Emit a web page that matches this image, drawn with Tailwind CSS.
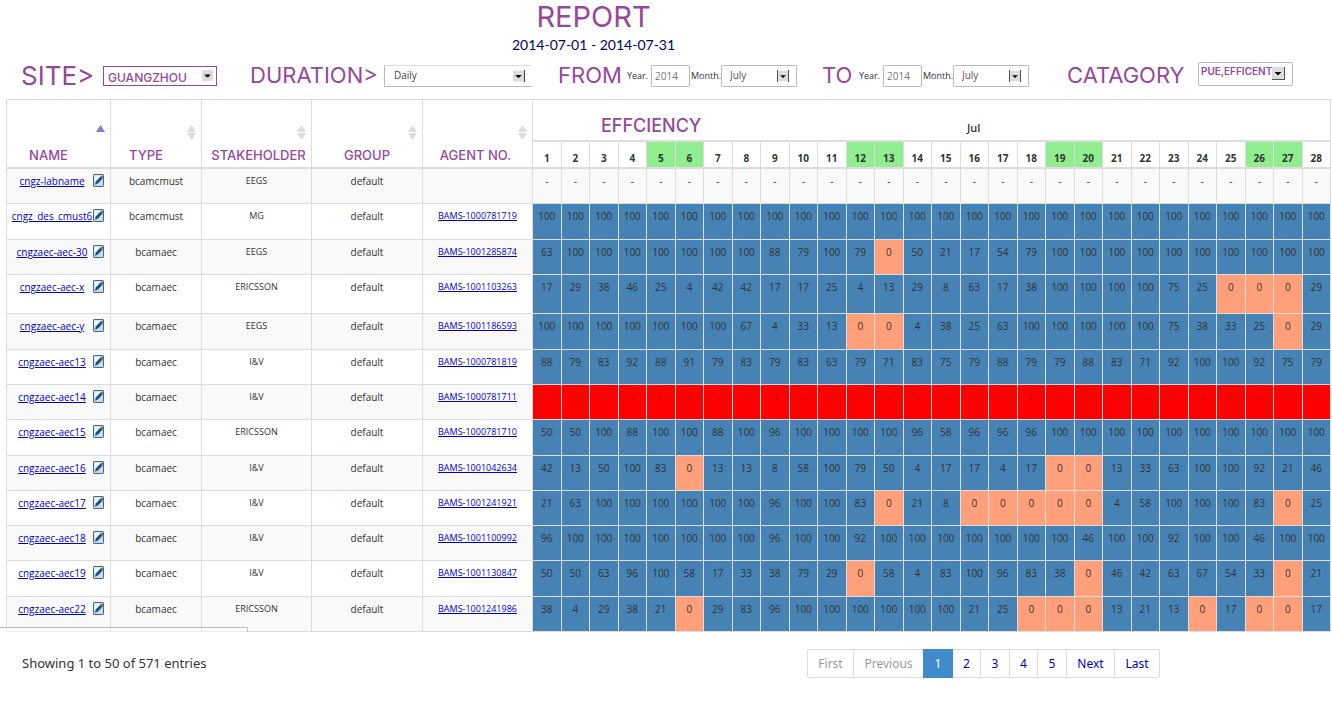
<!DOCTYPE html>
<html lang="en">
<head>
<meta charset="utf-8">
<title>Report</title>
<script src="https://cdn.jsdelivr.net/npm/@tailwindcss/browser@4"></script>
</head>
<body class="bg-white font-['Open_Sans',sans-serif] text-[10px] text-[#333] overflow-x-hidden">

<svg class="hidden">
  <symbol id="arrow" viewBox="0 0 12 12">
    <rect width="12" height="12" fill="#dcdcdc"/>
    <path d="M3 5h6v1h-1v1h-1v1h-2v-1h-1v-1h-1z" fill="#000"/>
  </symbol>
  <symbol id="sort" viewBox="0 0 9 15">
    <path d="M4.500 0L9 7H0zM0 8H9L4.500 15z" fill="#dcdcdc"/>
  </symbol>
  <symbol id="sort-asc" viewBox="0 0 9 15">
    <path d="M4.500 0L9 7H0z" fill="#7f7fd5"/>
  </symbol>
  <symbol id="edit" viewBox="0 0 11 13">
    <rect x=".5" y=".5" width="10" height="12" rx=".6" fill="#c6dde8" stroke="#4b6675"/>
    <path d="M1.500 1.500h6L1.500 9z" fill="#eef7fa"/>
    <path d="M2 10.800L2.800 7.400L7.400 2.800L9.400 4.800L4.900 9.600z" fill="#1d4f80"/>
    <path d="M7.400 2.800L9.200 1.400L10.200 3L9.400 4.800z" fill="#4d6b78"/>
  </symbol>
</svg>

<header class="ml-[512px] flex w-fit flex-col items-center pt-1">
  <h1 class="font-[Inter,sans-serif] text-[29px] leading-[26px] text-[#96489a]">REPORT</h1>
  <p class="pt-1.5 font-[Lato,sans-serif] text-[14px] leading-[18px] text-[#000066]">2014-07-01 - 2014-07-31</p>
</header>

<form class="grid h-[45px] grid-cols-[229px_308px_264px_245px_1fr] items-center pb-0.5 pl-[21px] font-[Inter,sans-serif] text-[22px] text-[#96489a]">
  <div class="flex items-center">
    <label for="site" class="w-[82px] text-[26px]">SITE&gt;</label>
    <span class="relative">
      <select id="site" class="block h-5 w-[114px] appearance-none border border-[#96489a] bg-white pt-1 pl-1 text-[12px] leading-[14px] font-medium"><option>GUANGZHOU</option></select>
      <svg class="pointer-events-none absolute top-1 right-1 size-[11px]"><use href="#arrow"/></svg>
    </span>
  </div>
  <div class="flex items-center">
    <label for="duration" class="w-[134px]">DURATION&gt;</label>
    <span class="relative">
      <select id="duration" class="block h-[22px] w-[148px] appearance-none border-y border-l border-t-[#ddd] border-b-[#bbb] border-l-[#bbb] bg-white pl-[9px] font-['Open_Sans',sans-serif] text-[10px] text-[#444]"><option>Daily</option></select>
      <svg class="pointer-events-none absolute top-[5px] right-[7px] size-3 border-r border-[#444]"><use href="#arrow"/></svg>
    </span>
  </div>
  <div class="flex items-center">
    <span class="w-[69px]">FROM</span>
    <label for="year-from" class="w-[24px] font-['Open_Sans',sans-serif] text-[9px] text-[#333]">Year.</label>
    <input id="year-from" value="2014" class="h-[22px] w-[39px] rounded-xs border border-[#bbb] pl-[3px] font-['Open_Sans',sans-serif] text-[10px] text-[#777]">
    <label for="month-from" class="w-[31px] pl-px font-['Open_Sans',sans-serif] text-[9px] text-[#333]">Month.</label>
    <span class="relative">
      <select id="month-from" class="block h-[22px] w-[76px] appearance-none rounded-xs border border-[#bbb] bg-white pl-2 font-['Open_Sans',sans-serif] text-[10px] text-[#555]"><option>July</option></select>
      <svg class="pointer-events-none absolute top-[5px] right-2 size-3 border-x border-[#555]"><use href="#arrow"/></svg>
    </span>
  </div>
  <div class="flex items-center">
    <span class="w-[37px]">TO</span>
    <label for="year-to" class="w-[24px] font-['Open_Sans',sans-serif] text-[9px] text-[#333]">Year.</label>
    <input id="year-to" value="2014" class="h-[22px] w-[39px] rounded-xs border border-[#bbb] pl-[3px] font-['Open_Sans',sans-serif] text-[10px] text-[#777]">
    <label for="month-to" class="w-[31px] pl-px font-['Open_Sans',sans-serif] text-[9px] text-[#333]">Month.</label>
    <span class="relative">
      <select id="month-to" class="block h-[22px] w-[76px] appearance-none rounded-xs border border-[#bbb] bg-white pl-2 font-['Open_Sans',sans-serif] text-[10px] text-[#555]"><option>July</option></select>
      <svg class="pointer-events-none absolute top-[5px] right-2 size-3 border-x border-[#555]"><use href="#arrow"/></svg>
    </span>
  </div>
  <div class="flex items-center">
    <label for="category" class="w-[131px]">CATAGORY</label>
    <span class="relative">
      <select id="category" class="mb-1 block h-6 w-[95px] appearance-none rounded-xs border border-[#bbb] bg-white pb-1 pl-0.5 text-[10px] font-semibold"><option>PUE,EFFICENT</option></select>
      <svg class="pointer-events-none absolute top-[5px] right-2 size-[13px] border-r border-b border-[#555]"><use href="#arrow"/></svg>
    </span>
  </div>
</form>

<div class="relative pr-px pl-1.5">
  <table class="w-full table-fixed border-collapse border border-[#ddd] text-center">
    <colgroup>
      <col class="w-[104px]"><col class="w-[91px]"><col class="w-[110px]"><col class="w-[111px]"><col class="w-[110px]"><col span="28">
    </colgroup>
    <thead>
      <tr id="head" class="h-[41px]"></tr>
      <tr id="days" class="h-[27px]"></tr>
    </thead>
    <tbody id="body"></tbody>
  </table>
  <div class="absolute bottom-0 left-0 h-[5px] w-[248px] rounded-tr-xs border-t border-r border-[#bbb] bg-white/50"></div>
</div>

<footer class="flex items-center justify-between pt-[17px] pr-[172px] pl-[22px] font-['Noto_Sans',sans-serif] text-[12px]">
  <p class="text-[13px]">Showing 1 to 50 of 571 entries</p>
  <nav class="flex h-[29px] rounded-xs border border-[#ddd] text-[#0000cc]">
    <button type="button" disabled class="w-[46px] border-r border-[#ddd] text-[#999]">First</button>
    <button type="button" disabled class="w-[69px] text-[#999]">Previous</button>
    <a href="#1" class="-my-px flex w-[30px] items-center justify-center bg-[#428bca] text-white">1</a>
    <a href="#2" class="flex w-7 items-center justify-center border-r border-[#ddd]">2</a>
    <a href="#3" class="flex w-[29px] items-center justify-center border-r border-[#ddd]">3</a>
    <a href="#4" class="flex w-7 items-center justify-center border-r border-[#ddd]">4</a>
    <a href="#5" class="flex w-[29px] items-center justify-center border-r border-[#ddd]">5</a>
    <a href="#next" class="flex w-12 items-center justify-center border-r border-[#ddd]">Next</a>
    <a href="#last" class="flex w-11 items-center justify-center">Last</a>
  </nav>
</footer>

<script>
const H100 = Array(28).fill(100).join(' ');
const dashes = Array(28).fill('-').join(' ');
const tall = 'h-9', base = 'h-[35px]', extra = 'h-[39px]';
const rows = [
  ['cngz-labname', 'bcamcmust', 'EEGS', '', dashes, tall],
  ['cngz_des_cmust6', 'bcamcmust', 'MG', 'BAMS-1000781719', H100, tall],
  ['cngzaec-aec-30', 'bcamaec', 'EEGS', 'BAMS-1001285874', '63 100 100 100 100 100 100 100 88 79 100 79 0 50 21 17 54 79 100 100 100 100 100 100 100 100 100 100', base],
  ['cngzaec-aec-x', 'bcamaec', 'ERICSSON', 'BAMS-1001103263', '17 29 38 46 25 4 42 42 17 17 25 4 13 29 8 63 17 38 100 100 100 100 75 25 0 0 0 29', extra],
  ['cngzaec-aec-y', 'bcamaec', 'EEGS', 'BAMS-1001186593', '100 100 100 100 100 100 100 67 4 33 13 0 0 4 38 25 63 100 100 100 100 100 75 38 33 25 0 29', tall],
  ['cngzaec-aec13', 'bcamaec', 'I&amp;V', 'BAMS-1000781819', '88 79 83 92 88 91 79 83 79 83 63 79 71 83 75 79 88 79 79 88 83 71 92 100 100 92 75 79', base],
  ['cngzaec-aec14', 'bcamaec', 'I&amp;V', 'BAMS-1000781711', dashes, base],
  ['cngzaec-aec15', 'bcamaec', 'ERICSSON', 'BAMS-1000781710', '50 50 100 88 100 100 88 100 96 100 100 100 100 96 58 96 96 96 100 100 100 100 100 100 100 100 100 100', tall],
  ['cngzaec-aec16', 'bcamaec', 'I&amp;V', 'BAMS-1001042634', '42 13 50 100 83 0 13 13 8 58 100 79 50 4 17 17 4 17 0 0 13 33 63 100 100 92 21 46', base],
  ['cngzaec-aec17', 'bcamaec', 'I&amp;V', 'BAMS-1001241921', '21 63 100 100 100 100 100 100 96 100 100 83 0 21 8 0 0 0 0 0 4 58 100 100 100 83 0 25', base],
  ['cngzaec-aec18', 'bcamaec', 'I&amp;V', 'BAMS-1001100992', '96 100 100 100 100 100 100 100 96 100 100 92 100 100 100 100 100 100 100 46 100 100 92 100 100 46 100 100', base],
  ['cngzaec-aec19', 'bcamaec', 'I&amp;V', 'BAMS-1001130847', '50 50 63 96 100 58 17 33 38 79 29 0 58 4 83 100 96 83 38 0 46 42 63 67 54 33 0 21', tall],
  ['cngzaec-aec22', 'bcamaec', 'ERICSSON', 'BAMS-1001241986', '38 4 29 38 21 0 29 83 96 100 100 100 100 100 100 21 25 0 0 0 13 21 13 0 17 0 0 17', base]
];
const weekend = [5, 6, 12, 13, 19, 20, 26, 27];
const heads = [['NAME', 'pr-5'], ['TYPE', 'pr-5'], ['STAKEHOLDER', 'pl-1'], ['GROUP', ''], ['AGENT NO.', 'pr-1']];

document.getElementById('head').innerHTML = heads.map(([t, pad], i) => `
  <th rowspan="2" class="border border-b-2 border-[#ddd] p-0 pt-[25px] align-top font-medium">
    <div class="flex flex-col">
      <svg class="mr-[5px] h-[15px] w-[9px] self-end"><use href="${i ? '#sort' : '#sort-asc'}"/></svg>
      <span class="${pad} pt-1.5 font-[Inter,sans-serif] text-[13px] leading-[18px] text-[#96489a]">${t}</span>
    </div>
  </th>`).join('') + `
  <th colspan="28" class="border border-b-2 border-[#ddd] p-0 pt-3 pl-[68px]">
    <div class="flex items-center">
      <span class="w-[366px] text-left font-[Inter,sans-serif] text-[18px] leading-6 font-medium text-[#96489a]">EFFCIENCY</span>
      <span class="pt-1 text-[11px] leading-4 font-semibold">Jul</span>
    </div>
  </th>`;

document.getElementById('days').innerHTML = Array.from({length: 28}, (_, i) =>
  `<th class="border border-b-2 border-[#ddd] p-0 pt-2 leading-4 font-bold ${weekend.includes(i + 1) ? 'bg-[#90ee90]' : ''}">${i + 1}</th>`).join('');

document.getElementById('body').innerHTML = rows.map(([name, type, holder, agent, vals, h], r) => {
  const td = 'border border-[#ddd] p-0 pt-[5px] align-top leading-[14px]';
  const cells = vals.split(' ').map(v => {
    const bg = v === '0' ? 'bg-[#ffa07a]' : v !== '-' ? 'bg-[#4682b4]' : r ? 'bg-[#ff0000]' : '';
    return `<td class="${td} ${bg}">${v}</td>`;
  }).join('');
  return `<tr class="${h} ${r % 2 ? '' : 'bg-[#f9f9f9]'}">
    <td class="${td}"><div class="flex pr-1.5 pl-1">
      <a href="#${name}" class="flex-1 whitespace-nowrap text-[#0000cc] underline">${name}</a>
      <button type="button" aria-label="Edit ${name}" class="h-[13px] w-[11px]"><svg class="block h-[13px] w-[11px]"><use href="#edit"/></svg></button>
    </div></td>
    <td class="${td}">${type}</td><td class="${td} text-[9px]">${holder}</td><td class="${td}">default</td>
    <td class="${td} text-[9px]">${agent ? `<a href="#${agent}" class="text-[#0000cc] underline">${agent}</a>` : ''}</td>${cells}</tr>`;
}).join('');
</script>
</body>
</html>
